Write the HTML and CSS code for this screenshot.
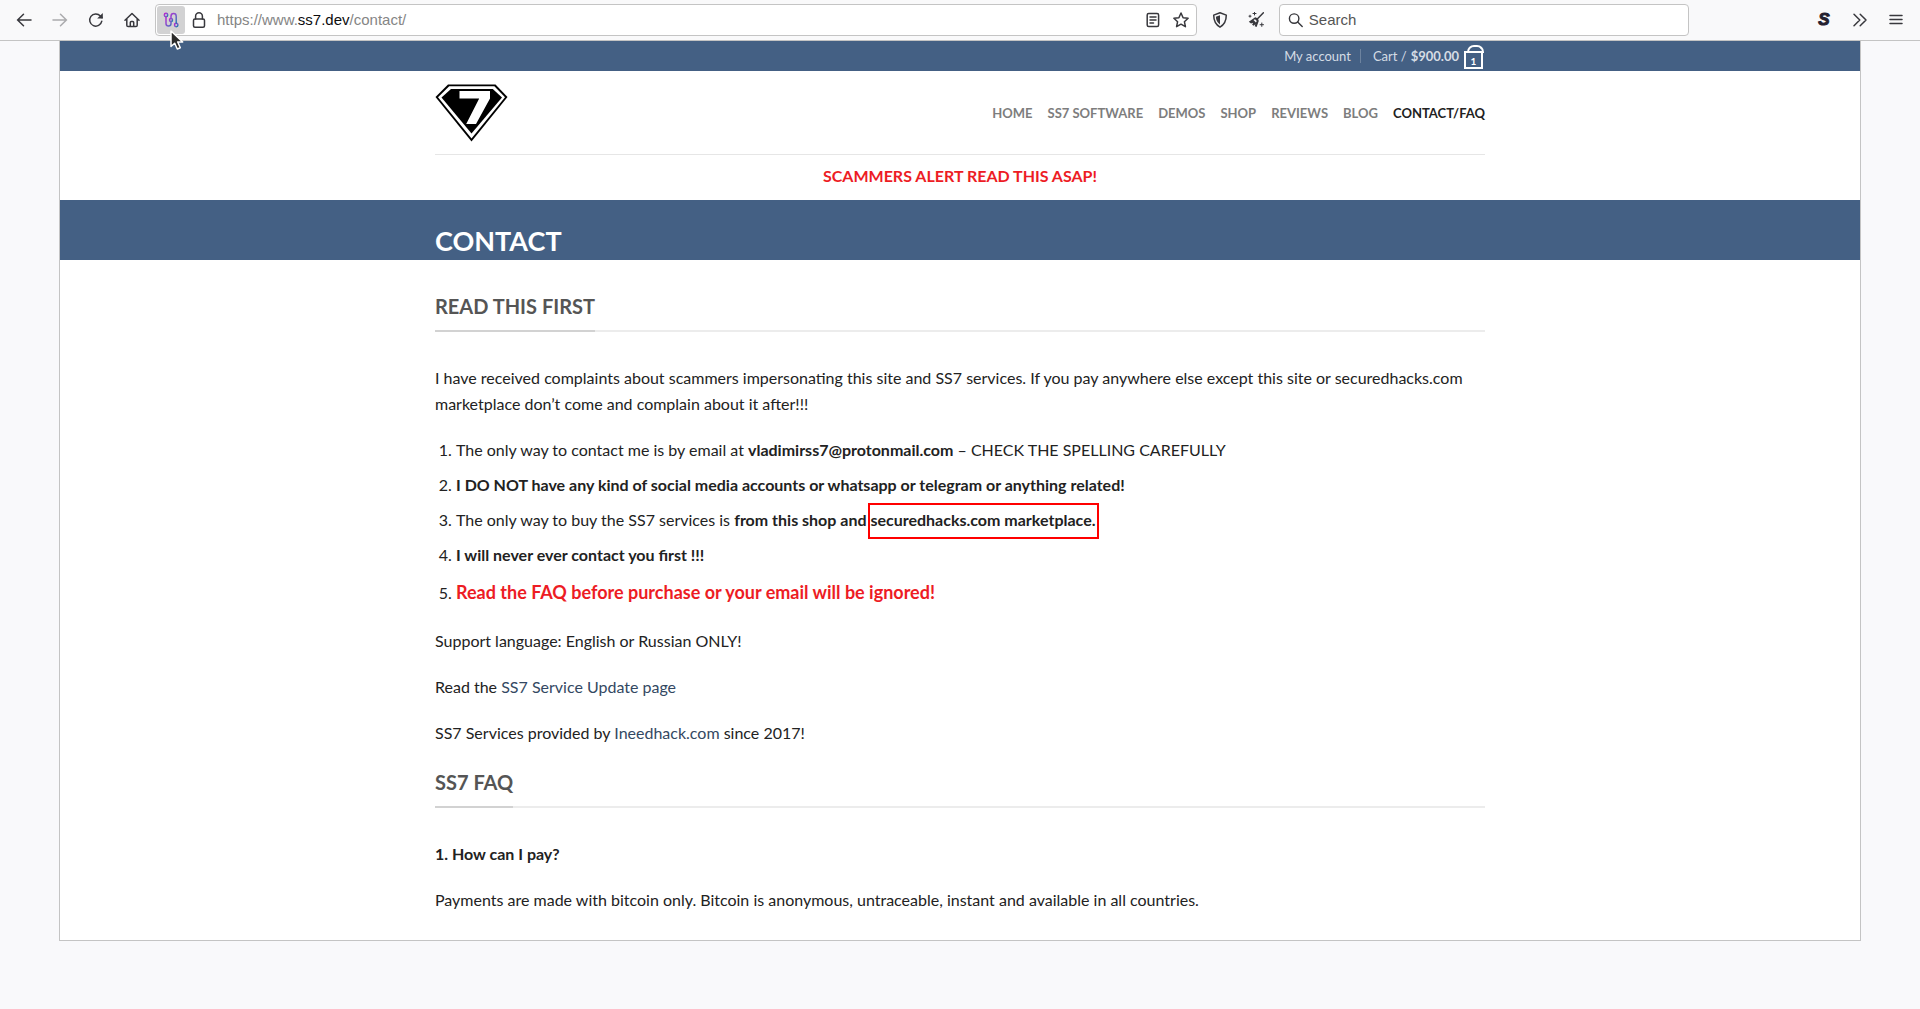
FILE: index.html
```
<!DOCTYPE html>
<html lang="en">
<head>
    <meta charset="UTF-8">
    <meta name="viewport" content="width=device-width, initial-scale=1.0">
    <title>Contact</title>
    <link rel="stylesheet" href="styles.css">
</head>
<body>
    <!-- Browser toolbar -->
    <div class="toolbar">
        <button class="tool" aria-label="Back">
            <svg width="16" height="16" viewBox="0 0 16 16"><path d="M15 8H1.5M7.5 2.2L1.6 8l5.9 5.8"/></svg>
        </button>
        <button class="tool disabled" aria-label="Forward">
            <svg width="16" height="16" viewBox="0 0 16 16"><path d="M1 8h13.5M8.5 2.2L14.4 8l-5.9 5.8"/></svg>
        </button>
        <button class="tool" aria-label="Reload">
            <svg width="16" height="16" viewBox="0 0 16 16"><path d="M13.8 9.2A6.1 6.1 0 1 1 12.4 4L14 5.6"/><path class="solid" d="M14.8 1v5.6H9.2z"/></svg>
        </button>
        <button class="tool" aria-label="Home">
            <svg width="16" height="16" viewBox="0 0 16 16"><path d="M1 8.2L8 1.5l7 6.7M2.8 7v6.2c0 .8.5 1.3 1.3 1.3h7.8c.8 0 1.3-.5 1.3-1.3V7M6.3 14.2v-3.7c0-.6.4-1 1-1h1.4c.6 0 1 .4 1 1v3.7"/></svg>
        </button>

        <div class="urlbar">
            <button class="circuit" aria-label="Tor circuit">
                <svg width="16" height="16" viewBox="0 0 16 16">
                    <defs>
                        <linearGradient id="circuit" x1="0" y1="0" x2="1" y2="1">
                            <stop offset="0" stop-color="#c61ad0"/>
                            <stop offset=".55" stop-color="#7a5ccb"/>
                            <stop offset="1" stop-color="#0a84a8"/>
                        </linearGradient>
                    </defs>
                    <g stroke="url(#circuit)">
                        <circle cx="3" cy="3" r="1.7"/>
                        <circle cx="8" cy="8" r="1.5"/>
                        <circle cx="13.2" cy="13" r="1.7"/>
                        <path d="M3 4.8v6.7a2.5 2.5 0 0 0 5 0V9.6M8 6.4V4.2a2.6 2.6 0 0 1 5.2 0v7"/>
                    </g>
                </svg>
            </button>
            <button class="lock" aria-label="Site security">
                <svg width="14" height="16" viewBox="0 0 14 16"><rect x="1.5" y="7" width="11" height="8.2" rx="1.5"/><path d="M3.6 7V4.2a3.4 3.4 0 0 1 6.8 0V7"/></svg>
            </button>
            <div class="address">https://www.<b>ss7.dev</b>/contact/</div>
            <button class="mini" aria-label="Reader view">
                <svg width="16" height="16" viewBox="0 0 16 16"><rect x="2.2" y="1.5" width="11.4" height="13" rx="1.5"/><path d="M5 5h6M5 8h6M5 11h3.5"/></svg>
            </button>
            <button class="mini" aria-label="Bookmark">
                <svg width="16" height="16" viewBox="0 0 16 16"><path d="M8 1l2.1 4.7 5 .6-3.7 3.4 1 5L8 12.2l-4.4 2.5 1-5L.9 6.3l5-.6z"/></svg>
            </button>
        </div>

        <button class="tool" aria-label="Security level">
            <svg width="16" height="16" viewBox="0 0 16 16"><path d="M8 .8l6.300 2.300c0 5-1.300 9.300-6.300 12.100C3 12.400 1.700 8.100 1.700 3.100z"/><path class="solid" d="M8 3.300v9.200C5 10.500 4 8 3.900 4.800z"/></svg>
        </button>
        <button class="tool" aria-label="New identity">
            <svg width="16" height="16" viewBox="0 0 16 16"><path d="M15.400.8L9.500 6.700"/><path class="solid" fill-rule="evenodd" d="M7.200 5.200c1.800.2 3.500 1.900 3.600 3.700L8.600 15l-1.800-.8.5-2-1.700 1.500-1.500-1 1.100-2-2.200.9L.8 9.700zM7 7.200L5.500 8.100l2.400 2.400.9-1.600z"/><path class="thin" d="M6.500 0v3M5 1.500h3M2 3.200v2M1 4.200h2M13.800 11v3.400M12.100 12.700h3.400"/></svg>
        </button>

        <label class="search">
            <svg width="16" height="16" viewBox="0 0 16 16"><circle cx="6.500" cy="6.500" r="5"/><path d="M10.200 10.200l4.800 4.600"/></svg>
            <input type="text" placeholder="Search" aria-label="Search">
        </label>
        <div class="spacer"></div>

        <button class="tool script-icon" aria-label="NoScript">S</button>
        <button class="tool" aria-label="More tools">
            <svg width="16" height="16" viewBox="0 0 16 16"><path d="M2 2.200L7.800 8 2 13.800M8.200 2.200L14 8l-5.800 5.800"/></svg>
        </button>
        <button class="tool" aria-label="Menu">
            <svg width="16" height="16" viewBox="0 0 16 16"><path d="M2 3.500h12M2 7.500h12M2 11.500h12"/></svg>
        </button>

        <svg class="cursor" width="15" height="21" viewBox="0 0 15 21"><path d="M1 1v15.500l3.700-3.300 2.600 5.800 3-1.300-2.600-5.700h5z"/></svg>
    </div>

    <div class="page">
        <div class="top-bar">
            <div class="container">
                <a href="#">My account</a>
                <span class="divider"></span>
                <a href="#" class="cart">Cart / <b>$900.00</b> <span class="bag">1</span></a>
            </div>
        </div>

        <header class="container header">
            <a href="#" aria-label="SS7 home">
                <svg class="logo" width="73" height="58" viewBox="0 0 73 58">
                    <path d="M13 .5h47.500L72.500 13 36.500 57.500.5 13z"/>
                    <path class="white" d="M14.200 2.300h45.200L70 13.200 36.500 54.500 3 13.200z"/>
                    <path d="M16 5h41.800l9.200 8.500-30.500 36L6.500 13.500z"/>
                    <path class="white" d="M24.500 7H55v7.500L41 40h-9.800l13-25.500H24.500z"/>
                </svg>
            </a>
            <nav>
                <a href="#">HOME</a>
                <a href="#">SS7 SOFTWARE</a>
                <a href="#">DEMOS</a>
                <a href="#">SHOP</a>
                <a href="#">REVIEWS</a>
                <a href="#">BLOG</a>
                <a href="#" class="active">CONTACT/FAQ</a>
            </nav>
        </header>
        <div class="container notice">SCAMMERS ALERT READ THIS ASAP!</div>

        <div class="page-title">
            <h1 class="container">CONTACT</h1>
        </div>

        <main class="container">
            <h3><span>READ THIS FIRST</span></h3>
            <p>I have received complaints about scammers impersonating this site and SS7 services. If you pay anywhere else except this site or securedhacks.com marketplace don’t come and complain about it after!!!</p>
            <ol>
                <li>The only way to contact me is by email at <b>vladimirss7@protonmail.com</b> – CHECK THE SPELLING CAREFULLY</li>
                <li><b>I DO NOT have any kind of social media accounts or whatsapp or telegram or anything related!</b></li>
                <li>The only way to buy the SS7 services is <b>from this shop and <span class="boxed">securedhacks.com marketplace.</span></b></li>
                <li><b>I will never ever contact you first !!!</b></li>
                <li><b class="warning">Read the FAQ before purchase or your email will be ignored!</b></li>
            </ol>
            <p>Support language: English or Russian ONLY!</p>
            <p>Read the <a href="#">SS7 Service Update page</a></p>
            <p>SS7 Services provided by <a href="#">Ineedhack.com</a> since 2017!</p>

            <h3><span>SS7 FAQ</span></h3>
            <p><b>1. How can I pay?</b></p>
            <p>Payments are made with bitcoin only. Bitcoin is anonymous, untraceable, instant and available in all countries.</p>
        </main>
    </div>
</body>
</html>
```
FILE: styles.css
```
* {
    box-sizing: border-box;
}

body {
    margin: 0;
    background-color: #f9f9fb;
    color: #222;
    font-family: Lato, sans-serif;
    font-size: 16px;
    line-height: 26px;
}

a {
    color: #334862;
    text-decoration: none;
}

/* Browser toolbar */
.toolbar {
    position: relative;
    display: flex;
    align-items: center;
    height: 41px;
    padding: 0 6px;
    background-color: #f9f9fa;
    border-bottom: 1px solid #c4c4c4;
    font-family: "Liberation Sans", Arial, sans-serif;
    font-size: 15px;
}

.toolbar button {
    display: flex;
    flex: none;
    align-items: center;
    justify-content: center;
    padding: 0;
    border: none;
    background: none;
}

.toolbar svg {
    fill: none;
    stroke: #38383d;
    stroke-width: 1.5;
    stroke-linecap: round;
    stroke-linejoin: round;
}

.toolbar .solid {
    fill: #38383d;
    stroke: none;
}

.toolbar .thin {
    stroke-width: 1;
}

.tool {
    width: 36px;
    height: 32px;
}

.disabled {
    opacity: 0.4;
}

.urlbar,
.search {
    display: flex;
    align-items: center;
    height: 32px;
    background-color: white;
    border: 1px solid #c4c4c4;
    border-radius: 4px;
}

.urlbar {
    flex: 1037 1 0;
    margin: 0 5px;
    padding: 0 1px;
}

.toolbar .circuit {
    width: 28px;
    height: 28px;
    border-radius: 3px;
    background-color: #d2d2d3;
}

.lock {
    width: 28px;
}

.mini {
    width: 28px;
}

.address {
    flex: 1;
    padding-left: 4px;
    color: #858585;
}

.address b {
    color: #0c0c0d;
    font-weight: normal;
}

.search {
    flex: 392 1 0;
    margin-left: 5px;
    padding: 0 8px;
    gap: 6px;
}

.search input {
    width: 100%;
    padding: 0;
    border: none;
    outline: none;
    background: none;
    font: inherit;
}

.search input::placeholder {
    color: #555;
}

.spacer {
    flex: 117 1 0;
}

.script-icon {
    color: #24202f;
    font-family: "Liberation Sans", Arial, sans-serif;
    font-size: 17px;
    font-style: italic;
    font-weight: bold;
    -webkit-text-stroke: 1px #24202f;
}

.toolbar .cursor {
    position: absolute;
    top: 30px;
    left: 170px;
    fill: #2b2b2b;
    stroke: white;
}

/* Site */
.page {
    margin: 0 59px;
    background-color: white;
    border: 1px solid #c4c4c4;
    border-top: none;
}

.container {
    width: 100%;
    max-width: 1050px;
    margin: 0 auto;
}

.top-bar {
    background-color: #446084;
    font-size: 13px;
}

.top-bar .container {
    display: flex;
    align-items: center;
    justify-content: flex-end;
    height: 30px;
    padding-right: 2px;
}

.top-bar a {
    color: #d5dce4;
}

.divider {
    width: 1px;
    height: 14px;
    margin: 0 12px 0 9px;
    background-color: #6d839f;
}

.cart {
    display: flex;
    align-items: center;
    gap: 4px;
}

.bag {
    position: relative;
    width: 19px;
    height: 18px;
    margin: 8px 0 0 1px;
    border: 2px solid white;
    color: white;
    font-size: 10px;
    font-weight: bold;
    line-height: 16px;
    text-align: center;
}

/* Bag handle */
.bag::before {
    content: "";
    position: absolute;
    bottom: 100%;
    left: 1px;
    width: 13px;
    height: 6px;
    border: 2px solid white;
    border-bottom: none;
    border-radius: 7px 7px 0 0;
}

.header {
    display: flex;
    align-items: center;
    justify-content: space-between;
    height: 84px;
    border-bottom: 1px solid #e6e6e6;
}

.logo {
    display: block;
}

.logo .white {
    fill: white;
}

nav {
    display: flex;
    gap: 15px;
    font-size: 13px;
    font-weight: bold;
}

nav a {
    color: #7d7d7d;
}

nav .active {
    color: #222;
}

.notice {
    padding: 8px 0 11px;
    color: #ed1c24;
    font-weight: bold;
    text-align: center;
}

.page-title {
    padding: 23px 0 1px;
    background-color: #446084;
    color: white;
}

h1 {
    font-size: 27px;
    line-height: 36px;
}

main {
    padding: 30px 0 7px;
}

h3 {
    display: flex;
    margin: 0 0 33px;
    border-bottom: 2px solid #ececec;
    color: #555;
    font-size: 20px;
    line-height: 32px;
}

h3 span {
    margin-bottom: -2px;
    padding-bottom: 8px;
    border-bottom: 2px solid #d2d2d2;
}

p {
    margin: 0 0 20px;
}

ol {
    margin: 0 0 20px;
    padding-left: 21px;
}

li {
    margin-bottom: 9px;
}

li:last-child {
    line-height: 30px;
}

.boxed {
    position: relative;
}

.boxed::after {
    content: "";
    position: absolute;
    inset: -7px -4px -10px -2px;
    border: 2px solid #f00;
}

.warning {
    color: #ed1c24;
    font-size: 18px;
}
```
